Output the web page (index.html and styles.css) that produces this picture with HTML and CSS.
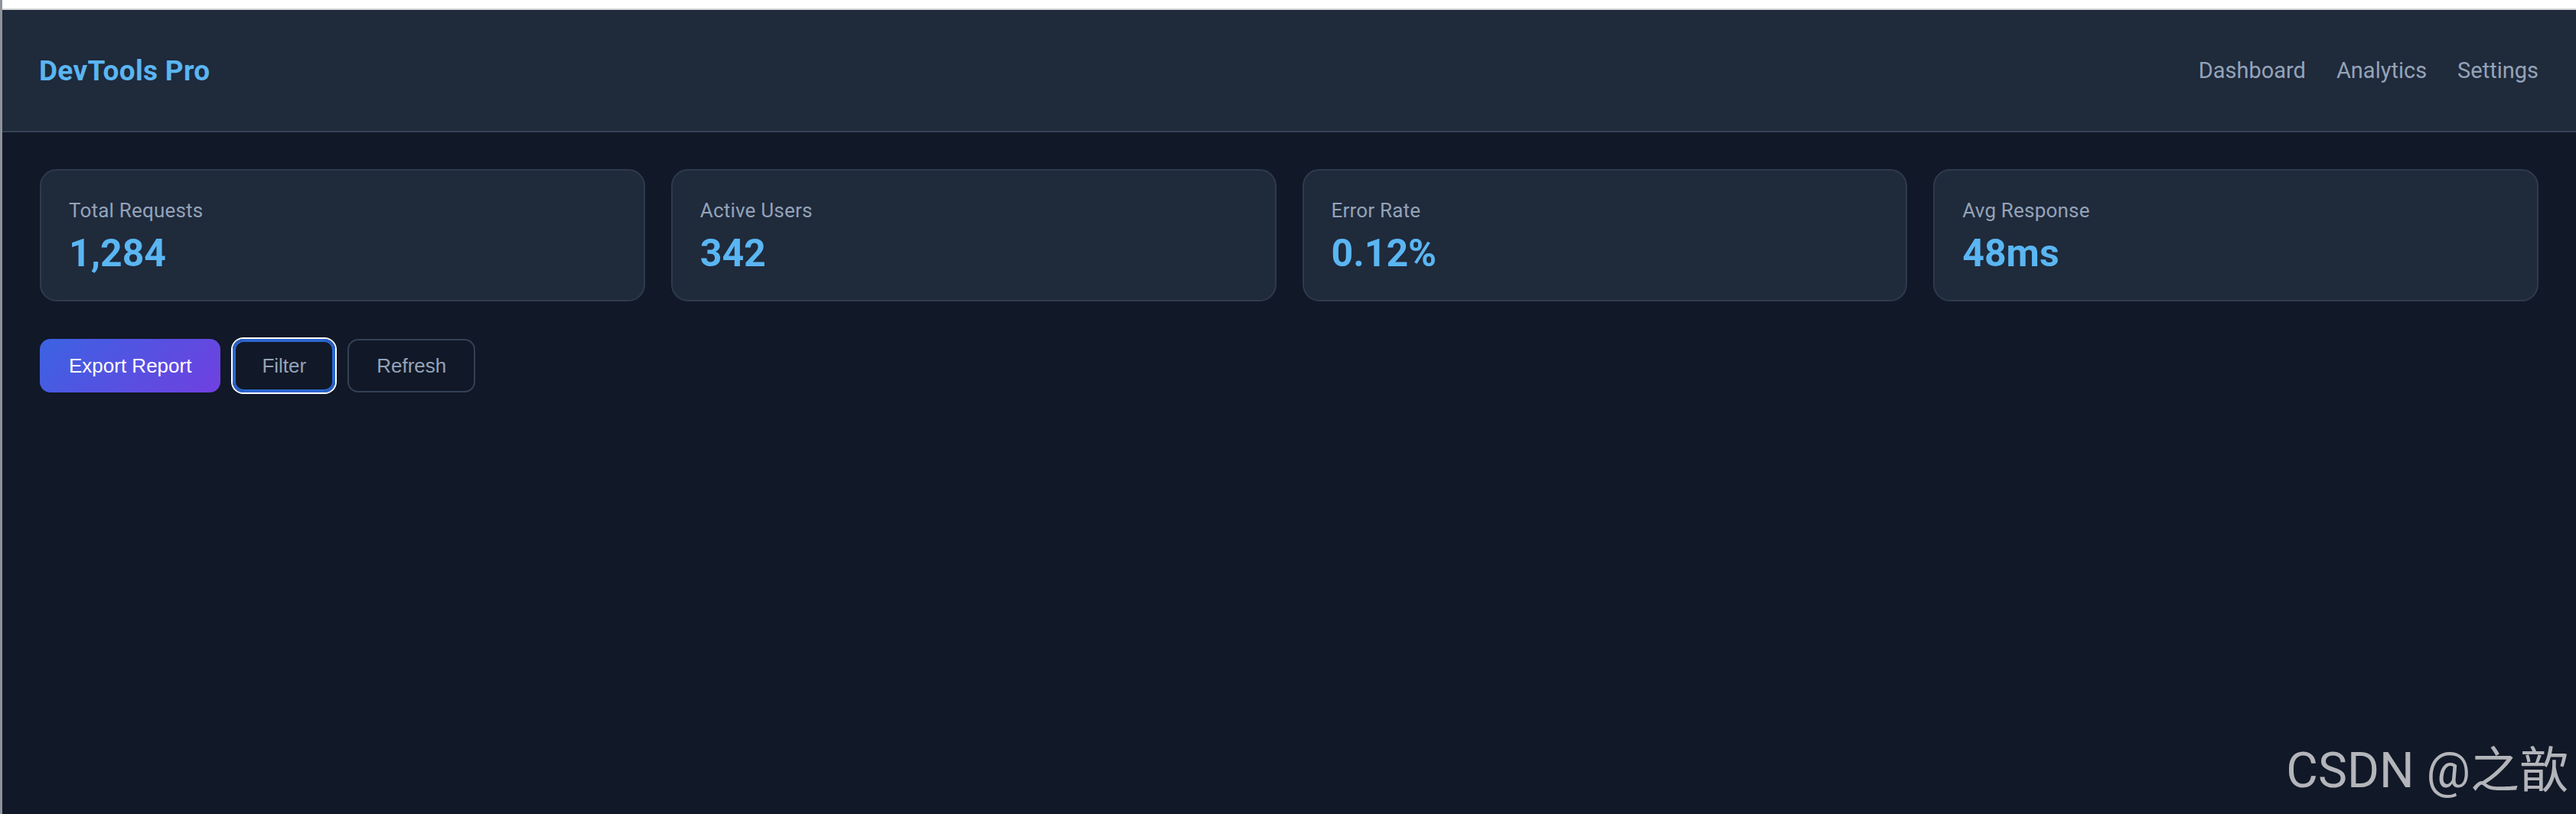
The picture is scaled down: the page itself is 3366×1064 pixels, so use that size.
FILE: index.html
```html
<!DOCTYPE html>
<html lang="en">
<head>
    <meta charset="UTF-8">
    <meta name="viewport" content="width=device-width, initial-scale=1.0">
    <title>DevTools Pro</title>
    <link rel="stylesheet" href="styles.css">
</head>
<body>

<div class="window-bar"></div>

<header class="topbar">
    <div class="brand">DevTools Pro</div>
    <nav class="nav">
        <a href="#">Dashboard</a>
        <a href="#">Analytics</a>
        <a href="#">Settings</a>
    </nav>
</header>

<main class="content">
    <section class="stats">
        <div class="stat-card">
            <div class="stat-label">Total Requests</div>
            <div class="stat-value">1,284</div>
        </div>
        <div class="stat-card">
            <div class="stat-label">Active Users</div>
            <div class="stat-value">342</div>
        </div>
        <div class="stat-card">
            <div class="stat-label">Error Rate</div>
            <div class="stat-value">0.12%</div>
        </div>
        <div class="stat-card">
            <div class="stat-label">Avg Response</div>
            <div class="stat-value">48ms</div>
        </div>
    </section>

    <div class="actions">
        <button class="btn btn-primary">Export Report</button>
        <button class="btn btn-outline is-focused">Filter</button>
        <button class="btn btn-outline">Refresh</button>
    </div>
</main>

<div class="watermark">CSDN @之歆</div>

</body>
</html>
```

FILE: styles.css
```css
html, body {
    height: 100%;
}
body {
    margin: 0;
    box-sizing: border-box;
    background-color: #111827;
    border-left: 3px solid #8e939a;
    font-family: Roboto, "Noto Sans", sans-serif;
}
.window-bar {
    height: 11px;
    background: #fff;
    border-bottom: 2px solid #d5d5d5;
}
.topbar {
    height: 158px;
    display: flex;
    align-items: center;
    justify-content: space-between;
    padding: 0 49px 0 48px;
    background: #1f2a3b;
    border-bottom: 2px solid #334155;
}
.brand {
    font-size: 37px;
    font-weight: 700;
    letter-spacing: 0.3px;
    color: #5ab6f2;
}
.nav {
    display: flex;
    gap: 40px;
}
.nav a {
    font-size: 29px;
    color: #94a3b8;
    text-decoration: none;
}
.content {
    padding: 48px 49px 0 49px;
}
.stats {
    display: grid;
    grid-template-columns: repeat(4, 1fr);
    gap: 34px;
}
.stat-card {
    background: #1f2a3b;
    border: 2px solid #2f3a4d;
    border-radius: 22px;
    padding: 36px 36px 31px;
}
.stat-label {
    font-size: 26px;
    line-height: 32px;
    letter-spacing: 0.2px;
    color: #94a3b8;
}
.stat-value {
    margin-top: 10px;
    font-size: 50px;
    line-height: 60px;
    font-weight: 700;
    color: #5ab6f2;
}
.actions {
    display: flex;
    gap: 16px;
    margin-top: 49px;
}
.btn {
    font-family: "Liberation Sans", Arial, sans-serif;
    font-size: 26px;
    line-height: 30px;
    padding: 18px 36px;
    border: 2px solid #334155;
    border-radius: 14px;
    background: transparent;
    color: #94a3b8;
    cursor: pointer;
}
.btn-primary {
    border: none;
    padding: 20px 38px;
    background: linear-gradient(135deg, #3b63e2, #7040e0);
    color: #fff;
}
.is-focused {
    border-color: #2b66cf;
    box-shadow: inset 0 0 0 2px #2b66cf, 0 0 0 2px #fff;
}
.watermark {
    position: absolute;
    right: 10px;
    bottom: 24px;
    font-family: Roboto, "Noto Sans CJK SC", sans-serif;
    font-size: 64px;
    line-height: 64px;
    color: #b3b5ba;
}
```
